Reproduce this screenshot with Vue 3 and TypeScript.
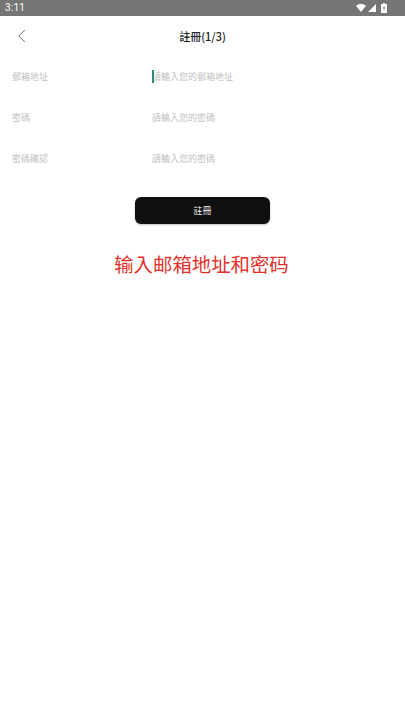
<script setup lang="ts">
const rows = [
  { label: '郵箱地址', hint: '請輸入您的郵箱地址', focus: true },
  { label: '密碼', hint: '請輸入您的密碼', focus: false },
  { label: '密碼確認', hint: '請輸入您的密碼', focus: false },
]
</script>

<template>
  <div class="page">
    <div class="status">
      <span class="time">3:11</span>
      <div class="sys">
        <svg width="10" height="8" viewBox="0 0 13 10" preserveAspectRatio="none"><path d="M0 2.2C3.8-.7 9.2-.7 13 2.2L6.5 10z" fill="#fff" /></svg>
        <svg width="8" height="8" viewBox="0 0 9 9"><path d="M9 0v9H0z" fill="#fff" /></svg>
        <svg class="batt" width="6" height="10" viewBox="0 0 6 10"><path d="M2 0h2v1h2v9H0V1h2z" fill="#fff" /><path d="M3.4 2.5 1.8 5.6h1v2l1.4-3h-1z" fill="#777" /></svg>
      </div>
    </div>
    <header class="nav">
      <svg class="back" width="10" height="14" viewBox="0 0 10 14"><path d="M7.8 1 1.8 7l6 6" fill="none" stroke="#666" stroke-width="1" /></svg>
      <h1 class="title">註冊(1/3)</h1>
    </header>
    <form class="form" @submit.prevent>
      <div v-for="row in rows" :key="row.label" class="row">
        <span class="label">{{ row.label }}</span>
        <span class="field"><i v-if="row.focus" class="caret"></i>{{ row.hint }}</span>
      </div>
    </form>
    <div class="action"><button class="submit" type="button">註冊</button></div>
    <p class="caption">输入邮箱地址和密码</p>
  </div>
</template>

<style>
html, body { margin: 0; background: #fff; }
</style>

<style scoped>
.page { width: 405px; height: 720px; background: #fff; overflow: hidden; opacity: .999; font-family: "Noto Sans CJK TC", "Noto Sans", sans-serif; }
.status { height: 16px; background: #757575; display: flex; align-items: center; justify-content: space-between; padding: 0 18px 0 5px; }
.time { color: #fff; font: 10px/16px Roboto, sans-serif; letter-spacing: .2px; }
.sys { display: flex; align-items: center; gap: 2px; }
.batt { margin-left: 3px; }
.nav { height: 41px; position: relative; display: flex; align-items: center; justify-content: center; }
.back { position: absolute; left: 17px; top: 13px; }
.title { margin: 0; font-size: 11px; font-weight: 500; color: #222; line-height: 41px; }
.form { margin-top: -1px; }
.row { height: 41px; display: grid; grid-template-columns: 140px 1fr; align-items: center; padding-left: 12px; box-sizing: border-box; font-size: 9px; color: #c0c0c0; }
.field { position: relative; }
.caret { position: absolute; left: 0; top: 50%; width: 2px; height: 13px; margin-top: -7px; background: #2a8a7c; }
.action { display: flex; justify-content: center; margin-top: 17.5px; }
.submit { width: 135px; height: 27px; border: 0; border-radius: 6px; background: #0f0f0f; color: #eee; font: 9px "Noto Sans CJK TC", sans-serif; box-shadow: 0 1px 2px rgba(0,0,0,.25); padding: 0; }
.caption { margin: 25px 0 0; padding-right: 2px; text-align: center; color: #e5302a; font-size: 19.4px; line-height: 30px; }
</style>
